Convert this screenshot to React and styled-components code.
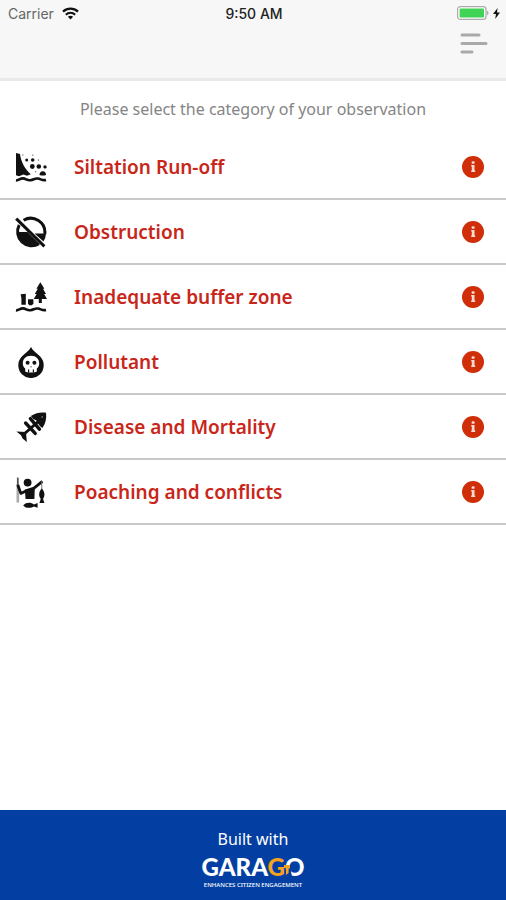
import React, { useState } from "react";
import styled, { createGlobalStyle } from "styled-components";

const GlobalStyle = createGlobalStyle`
  * {
    box-sizing: border-box;
  }

  body {
    margin: 0;
    background-color: #fff;
    font-family: "Noto Sans", "Open Sans", sans-serif;
  }
`;

const Page = styled.div`
  display: flex;
  flex-direction: column;
  min-height: 100vh;
`;

const Header = styled.header`
  background-color: #f7f7f7;
  border-bottom: 3px solid #e9e9e9;
  padding-bottom: 22px;
`;

const StatusBar = styled.div`
  display: grid;
  grid-template-columns: 1fr auto 1fr;
  align-items: center;
  height: 26px;
  padding: 0 6px 0 8px;
  font-family: Inter, sans-serif;
  font-size: 14px;
  color: #222;
`;

const StatusGroup = styled.div`
  display: flex;
  align-items: center;
  justify-content: ${(props) => (props.$end ? "flex-end" : "flex-start")};
  gap: ${(props) => (props.$end ? 4 : 8)}px;
  color: #666;
`;

const Time = styled.time`
  font-weight: 500;
`;

const Toolbar = styled.div`
  display: flex;
  justify-content: flex-end;
  padding: 4px 16px 0 0;
`;

const IconButton = styled.button`
  display: flex;
  padding: 0;
  border: none;
  background: none;
  cursor: pointer;
`;

const Prompt = styled.h1`
  margin: 0;
  padding: 16px 16px 14px;
  font-size: 16px;
  line-height: 24px;
  font-weight: 400;
  text-align: center;
  color: #858585;
`;

const List = styled.ul`
  margin: 0;
  padding: 0;
  list-style: none;
`;

const Row = styled.li`
  display: flex;
  align-items: center;
  height: 65px;
  padding-right: 22px;
  border-bottom: 2px solid #c9c9c9;
`;

const CategoryButton = styled.button`
  flex: 1;
  display: flex;
  align-items: center;
  gap: 27px;
  height: 100%;
  padding: 0 0 0 15px;
  border: none;
  background: none;
  font-family: inherit;
  font-size: 19px;
  line-height: 24px;
  font-weight: 600;
  text-align: left;
  color: #c9261a;
  cursor: pointer;
`;

const Footer = styled.footer`
  display: flex;
  flex-direction: column;
  align-items: center;
  margin-top: auto;
  padding: 18px 16px 11px;
  background-color: #033fa3;
  color: #fff;
`;

const BuiltWith = styled.span`
  font-size: 16px;
  line-height: 22px;
`;

const Logo = styled.a`
  display: flex;
  flex-direction: column;
  align-items: center;
  margin-top: 2px;
  color: #fff;
  text-decoration: none;
`;

const LogoName = styled.span`
  position: relative;
  font-family: Lato, sans-serif;
  font-size: 24px;
  line-height: 29px;
  font-weight: 900;
`;

const LogoAccent = styled.span`
  color: #f6a21c;
`;

const LogoTagline = styled.span`
  font-size: 6px;
  line-height: 8px;
  font-weight: 500;
`;

/* the arrow that cuts into the last letter of the name */
const LogoArrow = styled.svg`
  position: absolute;
  right: 12px;
  bottom: 5px;
`;

const WifiIcon = () => (
  <svg width="17" height="13" viewBox="0 0 17 13" fill="none" stroke="#111" strokeWidth="2.2">
    <path d="M1 4.6C5.3.7 11.7.7 16 4.6" />
    <path d="M3.8 7.7C6.5 5.3 10.5 5.3 13.2 7.7" />
    <path d="M8.5 12.4L5.9 9.8C7.3 8.5 9.7 8.5 11.1 9.8Z" fill="#111" stroke="none" />
  </svg>
);

const BatteryIcon = () => (
  <svg width="32" height="14" viewBox="0 0 32 14">
    <rect x="0.6" y="0.6" width="28.4" height="12.8" rx="2.8" fill="#fff" stroke="#aaa" strokeWidth="1.2" />
    <rect x="2.6" y="2.6" width="24.4" height="8.8" rx="1" fill="#3fd455" />
    <path d="M30 4.8Q31.6 5.4 31.6 7T30 9.2Z" fill="#aaa" />
  </svg>
);

const BoltIcon = () => (
  <svg width="7" height="11" viewBox="0 0 7 11">
    <path d="M4.6 0L0 6H3L2.2 11L7 4.6H4Z" fill="#111" />
  </svg>
);

const MenuIcon = () => (
  <svg width="30" height="26" viewBox="0 0 30 26" stroke="#a9a9a9" strokeWidth="3" strokeLinecap="round">
    <path d="M2 5H19M2 13.5H26M2 22H12" />
  </svg>
);

const InfoIcon = () => (
  <svg width="22" height="22" viewBox="0 0 22 22">
    <circle cx="11" cy="11" r="11" fill="#cf2e08" />
    <rect x="9.7" y="5.4" width="2.8" height="2.3" fill="#fbe6e0" />
    <path d="M9.2 9H12.5V14.6H13.2V16H9.2V14.6H9.8V10.4H9.2Z" fill="#f8dcd4" />
  </svg>
);

const Glyph = ({ children }) => (
  <svg width="32" height="32" viewBox="0 0 32 32" fill="#111" aria-hidden="true">
    {children}
  </svg>
);

const Water = () => (
  <path
    d="M1 29.3C3.5 29.8 5 27.3 8 27.4S12 29.8 15.5 29.2S20 27 23 27.6S27.5 29.8 31 29"
    fill="none"
    stroke="#111"
    strokeWidth="2.6"
  />
);

const SiltationIcon = () => (
  <Glyph>
    <path d="M1 2L5 3C6 11 10 18 15.8 23.2L12 24.8L8.5 23.4L4 25.2L1 24.3Z" />
    <circle cx="11.7" cy="9" r="1.5" />
    <circle cx="17.7" cy="9" r="1.8" />
    <circle cx="23.5" cy="9.1" r="0.8" opacity="0.5" />
    <circle cx="7.8" cy="4" r="0.8" opacity="0.5" />
    <circle cx="17.7" cy="4.3" r="0.8" opacity="0.5" />
    <circle cx="17.3" cy="15.5" r="2.4" />
    <circle cx="23.8" cy="15.5" r="2.3" />
    <circle cx="30" cy="15.9" r="1.7" />
    <circle cx="20.6" cy="20.8" r="0.8" opacity="0.5" />
    <path d="M24.4 23.9Q24.8 20.2 27.8 20.2T31 23.9Q27.8 25.3 24.4 23.9Z" />
    <Water />
  </Glyph>
);

const ObstructionIcon = () => (
  <Glyph>
    <path d="M8.6 4.2A14.2 14.2 0 0 1 29.8 18" fill="none" stroke="#111" strokeWidth="3" />
    <path d="M4.2 9A14.2 14.2 0 0 0 24 27.8" fill="none" stroke="#111" strokeWidth="3" />
    <path d="M2 16H12.5L24.6 28A14.8 14.8 0 0 1 2 16Z" />
    <path d="M19.6 17.4H31Q30.8 22 28.4 25.6Z" />
    <path d="M1.2 2.6L29.4 30.4" stroke="#111" strokeWidth="3" />
  </Glyph>
);

const BufferZoneIcon = () => (
  <Glyph>
    <path d="M25.3 1.2L29.4 7.8H28L31 13H29.2L32 18H26.8V22H23.8V18H18.8L21.6 13H19.8L22.8 7.8H21.4Z" />
    <path d="M5.6 13.3L10.8 12.7V23.8H6.4V17Z" />
    <path d="M13 18.2H18.4V22.6L17 24.2H14.2L13 22.6Z" />
    <Water />
  </Glyph>
);

const PollutantIcon = () => (
  <Glyph>
    <path d="M16 1C17.8 4.8 22 7.4 25.4 10.8A12.7 12.7 0 1 1 6.6 10.8C10 7.4 14.2 4.8 16 1Z" />
    <path
      d="M16 9.8C21.2 9.8 24.2 13 24.2 17.2C24.2 19.6 23.4 21.4 21.8 22.4V25.4C20 26.8 12 26.8 10.2 25.4V22.4C8.6 21.4 7.8 19.6 7.8 17.2C7.8 13 10.8 9.8 16 9.8Z"
      fill="#fff"
    />
    <circle cx="12.6" cy="16.8" r="2" />
    <circle cx="19.4" cy="16.8" r="2" />
    <path d="M13.6 23.4V26.6M18.4 23.4V26.6" stroke="#111" strokeWidth="1.2" />
    <path d="M16 20V21.4" stroke="#777" strokeWidth="1.2" />
  </Glyph>
);

const DiseaseIcon = () => (
  <Glyph>
    <path d="M15.8 5C21 1.8 26 1 31 1.8C31.8 7.2 30.6 12.4 27.4 17L25.4 15.4L23 12.6L21.4 9.4L18.4 8Z" />
    <circle cx="27.2" cy="6" r="0.8" fill="#999" />
    <path d="M8 24L25 9" stroke="#111" strokeWidth="3" />
    <path d="M15.4 7.6L24.4 18.2M10.6 12L20.2 22.4" stroke="#111" strokeWidth="3.4" strokeLinecap="round" />
    <path d="M1.4 20.4L11 21L11.8 31L7.6 27.4L6 24.2Z" />
  </Glyph>
);

const PoachingIcon = () => (
  <Glyph>
    <path d="M2.8 8V26.6" stroke="#aaa" strokeWidth="2.6" />
    <path d="M2.8 1.6V10" stroke="#555" strokeWidth="1.8" />
    <circle cx="12.6" cy="6.6" r="3.9" />
    <path d="M2.8 9L5.8 17.4L13 14L19 12.2L27.4 5.4" fill="none" stroke="#111" strokeWidth="2.8" strokeLinejoin="round" />
    <path d="M9.8 13.4L19.8 12L19.4 23H10.6Z" />
    <path d="M26.8 5V15" stroke="#777" strokeWidth="1" />
    <path d="M26.8 12.4C30 15.6 30.2 19.8 28 22.8L29.4 27H24.4L25.8 22.8C23.4 19.8 23.6 15.6 26.8 12.4Z" />
    <path d="M8.2 29.4C11 26 16 26.2 19 28.4L22.6 27V31.8L19 30.4C16 32.4 11 32.6 8.2 29.4Z" />
  </Glyph>
);

const categories = [
  { name: "Siltation Run-off", Icon: SiltationIcon },
  { name: "Obstruction", Icon: ObstructionIcon },
  { name: "Inadequate buffer zone", Icon: BufferZoneIcon },
  { name: "Pollutant", Icon: PollutantIcon },
  { name: "Disease and Mortality", Icon: DiseaseIcon },
  { name: "Poaching and conflicts", Icon: PoachingIcon },
];

const App = () => {
  const [selected, setSelected] = useState(null);

  return (
    <Page>
      <GlobalStyle />
      <Header>
        <StatusBar>
          <StatusGroup>
            Carrier
            <WifiIcon />
          </StatusGroup>
          <Time>9:50 AM</Time>
          <StatusGroup $end>
            <BatteryIcon />
            <BoltIcon />
          </StatusGroup>
        </StatusBar>
        <Toolbar>
          <IconButton type="button" aria-label="Menu">
            <MenuIcon />
          </IconButton>
        </Toolbar>
      </Header>

      <main>
        <Prompt>Please select the category of your observation</Prompt>
        <List>
          {categories.map(({ name, Icon }) => (
            <Row key={name}>
              <CategoryButton type="button" aria-pressed={selected === name} onClick={() => setSelected(name)}>
                <Icon />
                {name}
              </CategoryButton>
              <IconButton type="button" aria-label={`About ${name}`}>
                <InfoIcon />
              </IconButton>
            </Row>
          ))}
        </List>
      </main>

      <Footer>
        <BuiltWith>Built with</BuiltWith>
        <Logo href="#garago">
          <LogoName>
            GARA<LogoAccent>G</LogoAccent>O
            <LogoArrow width="8" height="12" viewBox="0 0 8 12" aria-hidden="true">
              <path d="M4 1H7V8L8 12H4Z" fill="#033fa3" />
              <path d="M0 1H6V4L4.6 5V9L2 11V4H0Z" fill="#f6a21c" />
            </LogoArrow>
          </LogoName>
          <LogoTagline>ENHANCES CITIZEN ENGAGEMENT</LogoTagline>
        </Logo>
      </Footer>
    </Page>
  );
};

export default App;
